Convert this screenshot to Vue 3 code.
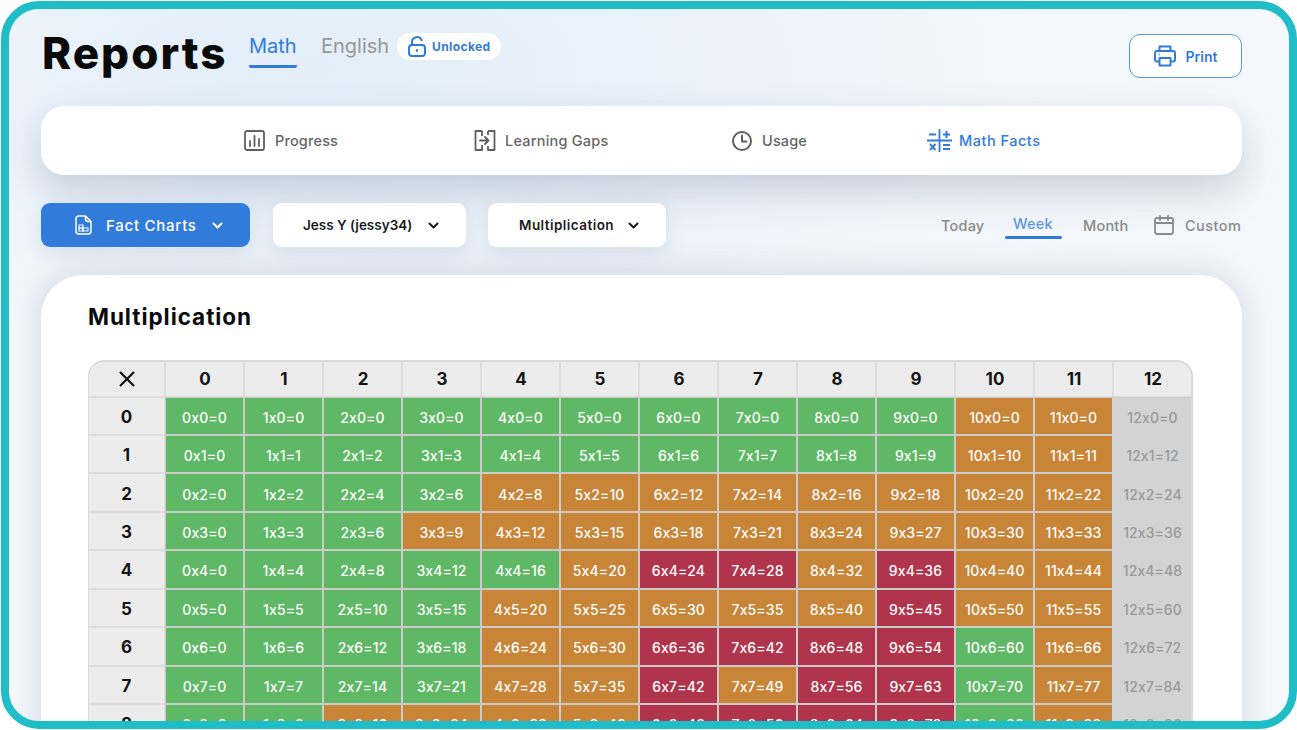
<script setup>
const rowColors = [
  'ggggggggggoox',
  'ggggggggggoox',
  'ggggoooooooox',
  'gggooooooooox',
  'gggggorrorоox',
  'ggggooooorоox',
  'ggggoorrrrgox',
  'ggggoororrgox',
  'ggoooorrrrgox',
]
const cols = Array.from({ length: 13 }, (_, i) => i)
const toneAt = (colors, c) => (colors[c] === 'g' || colors[c] === 'r' || colors[c] === 'x' ? colors[c] : 'o')
const rows = rowColors.map((colors, r) => ({
  r,
  cells: cols.map((c) => ({ c, label: `${c}x${r}=${c * r}`, tone: toneAt(colors, c) })),
}))
</script>

<template>
  <div class="frame">
    <header class="top">
      <h1 class="title">Reports</h1>
      <div class="tab active">Math</div>
      <div class="tab muted">English</div>
      <div class="pill">
        <svg width="20" height="21" viewBox="0 0 20 21" fill="none" stroke="#317bdb" stroke-width="2" stroke-linecap="round">
          <rect x="2" y="9" width="16" height="11" rx="3" />
          <path d="M5 9V6a5 5 0 0 1 9.6-1.800" />
          <path d="M10 14v1" stroke-width="2" />
        </svg>
        <span>Unlocked</span>
      </div>
      <button class="print">
        <svg width="22" height="22" viewBox="0 0 22 22" fill="none" stroke="#317bdb" stroke-width="2" stroke-linejoin="round">
          <path d="M5.500 6V1.500h11V6" />
          <path d="M5.500 16.500H3a2 2 0 0 1-2-2V8a2 2 0 0 1 2-2h16a2 2 0 0 1 2 2v6.500a2 2 0 0 1-2 2h-2.500" />
          <rect x="5.500" y="13" width="11" height="7.500" />
          <path d="M4.500 9.500h1" />
        </svg>
        <span>Print</span>
      </button>
    </header>

    <nav class="nav">
      <div class="nav-item">
        <svg width="21" height="21" viewBox="0 0 21 21" fill="none" stroke="#5f5f5f" stroke-width="1.800" stroke-linecap="round">
          <rect x="1" y="1" width="19" height="19" rx="2" />
          <path d="M6 11v5M10.500 6v10M15 9v7" />
        </svg>
        <span>Progress</span>
      </div>
      <div class="nav-item">
        <svg width="22" height="21" viewBox="0 0 22 21" fill="none" stroke="#5f5f5f" stroke-width="1.800" stroke-linejoin="round">
          <path d="M8 1H1.500v19H8v-5M8 6V1" />
          <path d="M14 1h6.500v19H14v-4M14 5V1" />
          <path d="M6 10.500h8.500M11 7l3.500 3.500L11 14" stroke-linecap="round" />
        </svg>
        <span>Learning Gaps</span>
      </div>
      <div class="nav-item">
        <svg width="20" height="20" viewBox="0 0 20 20" fill="none" stroke="#5f5f5f" stroke-width="2" stroke-linecap="round" stroke-linejoin="round">
          <circle cx="10" cy="10" r="9" />
          <path d="M10 4.500V10.500H14.500" />
        </svg>
        <span>Usage</span>
      </div>
      <div class="nav-item blue">
        <svg width="25" height="25" viewBox="0 0 25 25" fill="none" stroke="#317bdb" stroke-width="2">
          <path d="M12.500 1v23M0 12.500h25" stroke-width="1.800" />
          <path d="M2 6.500h7M16 6.500h7M19.500 3v7" />
          <path d="M3 16l5.500 6M8.500 16L3 22" />
          <path d="M16 17h7M16 21h7" />
        </svg>
        <span>Math Facts</span>
      </div>
    </nav>

    <section class="filters">
      <button class="select primary">
        <svg width="17" height="20" viewBox="0 0 17 20" fill="none" stroke="#fff" stroke-width="1.500" stroke-linejoin="round">
          <path d="M3.500 1h7L16 6.500V16a3 3 0 0 1-3 3H4a3 3 0 0 1-3-3V3.500A2.500 2.500 0 0 1 3.500 1z" />
          <path d="M10.500 1v3a2.500 2.500 0 0 0 2.500 2.500h3" />
          <rect x="4" y="10" width="4" height="3" stroke-width="1.200" />
          <rect x="4" y="13" width="4" height="3" stroke-width="1.200" />
          <rect x="8" y="13" width="5" height="3" stroke-width="1.200" />
        </svg>
        <span class="select-label light">Fact Charts</span>
        <svg class="chev" width="11" height="7" viewBox="0 0 11 7" fill="none" stroke="#fff" stroke-width="2" stroke-linecap="round" stroke-linejoin="round"><path d="M1.500 1.500l4 4 4-4" /></svg>
      </button>
      <button class="select student">
        <span class="select-label">Jess Y (jessy34)</span>
        <svg class="chev" width="11" height="7" viewBox="0 0 11 7" fill="none" stroke="#1a1a1a" stroke-width="2" stroke-linecap="round" stroke-linejoin="round"><path d="M1.500 1.500l4 4 4-4" /></svg>
      </button>
      <button class="select op">
        <span class="select-label wide">Multiplication</span>
        <svg class="chev" width="11" height="7" viewBox="0 0 11 7" fill="none" stroke="#1a1a1a" stroke-width="2" stroke-linecap="round" stroke-linejoin="round"><path d="M1.500 1.500l4 4 4-4" /></svg>
      </button>
      <div class="range">
        <span class="r-today">Today</span>
        <span class="r-week">Week</span>
        <span class="r-month">Month</span>
        <svg class="r-cal" width="20" height="20" viewBox="0 0 20 20" fill="none" stroke="#8a8a8a" stroke-width="1.800" stroke-linecap="round">
          <rect x="1" y="3" width="18" height="16" rx="2" />
          <path d="M1 8h18M6 1v4M14 1v4" />
        </svg>
        <span class="r-custom">Custom</span>
      </div>
    </section>

    <main class="card">
      <h2 class="card-title">Multiplication</h2>
      <div class="grid">
        <div class="head corner">
          <svg width="18" height="18" viewBox="0 0 18 18" fill="none" stroke="#141414" stroke-width="2.200"><path d="M2 2l14 14M16 2L2 16" /></svg>
        </div>
        <div v-for="c in cols" :key="'h' + c" class="head num">{{ c }}</div>
        <template v-for="row in rows" :key="row.r">
          <div class="head side">{{ row.r }}</div>
          <div v-for="cell in row.cells" :key="cell.c" class="cell" :class="'t-' + cell.tone">{{ cell.label }}</div>
        </template>
      </div>
    </main>
  </div>
</template>

<style>
html, body { margin: 0; background: #fff; }
</style>

<style scoped>
.frame {
  box-sizing: border-box;
  width: 1296px;
  height: 728px;
  margin: 1px 0 0 1px;
  border: 8px solid #1fbdc7;
  border-radius: 38px;
  overflow: hidden;
  padding: 25px 47px 0 32px;
  background:
    radial-gradient(700px 300px at 300px 60px, #e3eef9 0%, rgba(227, 238, 249, 0) 100%),
    linear-gradient(90deg, #f5f8fc 0%, #f0f5fb 50%, #f4f8fc 100%);
  font-family: Inter, "Noto Sans", "Liberation Sans", sans-serif;
  font-feature-settings: "calt" 0;
}
.top {
  display: flex;
  align-items: flex-start;
  height: 72px;
}
.title {
  margin: -3px 0 0 1px;
  font-size: 44px;
  line-height: 44px;
  font-weight: 800;
  color: #0a0a0a;
  width: 207px;
  letter-spacing: 2px;
}
.tab {
  font-size: 20px;
  line-height: 24px;
  padding-bottom: 7px;
}
.tab.active {
  color: #317bdb;
  width: 48px;
  border-bottom: 3px solid #317bdb;
  border-radius: 0 0 2px 2px;
  white-space: nowrap;
}
.tab.muted {
  color: #989898;
  margin-left: 24px;
  width: 76px;
  white-space: nowrap;
}
.pill {
  display: flex;
  align-items: center;
  gap: 5px;
  box-sizing: border-box;
  width: 104px;
  height: 27px;
  margin-top: -1px;
  padding-left: 10px;
  border-radius: 14px;
  background: #fff;
  color: #317bdb;
  font-size: 12px;
  font-weight: 700;
  letter-spacing: 0.400px;
}
.print {
  display: flex;
  align-items: center;
  justify-content: center;
  gap: 10px;
  margin-left: auto;
  box-sizing: border-box;
  width: 113px;
  height: 44px;
  padding: 0;
  background: #fff;
  border: 1.500px solid #5b96e0;
  border-radius: 11px;
  color: #317bdb;
  font: 600 14px Inter, sans-serif;
}
.nav {
  display: grid;
  grid-template-columns: 230px 258px 195px auto;
  align-items: center;
  height: 69px;
  padding-left: 203px;
  background: #fff;
  border-radius: 23px;
  box-shadow: 0 16px 38px rgba(80, 100, 125, 0.26);
}
.nav-item {
  display: flex;
  align-items: center;
  gap: 10px;
  color: #666;
  font-size: 14.500px;
  font-weight: 500;
  letter-spacing: 0.150px;
}
.nav-item:nth-child(2) { gap: 9px; letter-spacing: 0.220px; }
.nav-item.blue {
  color: #317bdb;
  gap: 7px;
  letter-spacing: 0.500px;
}
.filters {
  display: flex;
  align-items: center;
  height: 44px;
  margin-top: 28px;
}
.select {
  display: flex;
  align-items: center;
  box-sizing: border-box;
  height: 44px;
  padding: 0;
  border: 0;
  border-radius: 9px;
  background: #fff;
  box-shadow: 0 6px 20px rgba(80, 100, 125, 0.14);
  font-family: inherit;
  font-feature-settings: inherit;
  color: #1a1a1a;
}
.select.primary {
  width: 209px;
  padding-left: 34px;
  background: #317bdb;
}
.select.student {
  width: 193px;
  margin-left: 23px;
  padding-left: 30px;
}
.select.op {
  width: 178px;
  margin-left: 22px;
  padding-left: 31px;
}
.select-label {
  font-size: 13.500px;
  font-weight: 600;
  white-space: nowrap;
}
.select-label.wide { letter-spacing: 0.450px; }
.select-label.light {
  margin-left: 14px;
  font-size: 15px;
  font-weight: 500;
  letter-spacing: 0.750px;
  color: #fff;
}
.chev { margin-left: auto; margin-right: 27px; }
.range {
  display: flex;
  align-items: center;
  margin-left: auto;
  color: #8a8a8a;
  font-size: 14.500px;
  font-weight: 500;
  letter-spacing: 0.200px;
  position: relative;
  height: 44px;
}
.r-today { width: 64px; }
.r-week {
  width: 78px;
  margin-top: -4px;
  color: #5b96e0;
  padding-left: 8px;
  box-sizing: border-box;
}
.r-week::after {
  content: "";
  position: absolute;
  left: 64px;
  bottom: 8px;
  width: 57px;
  height: 3px;
  border-radius: 2px;
  background: #317bdb;
}
.r-month { width: 71px; }
.r-cal { margin-right: 11px; }
.r-custom { width: 57px; white-space: nowrap; letter-spacing: 0.450px; }
.card {
  margin-top: 28px;
  height: 600px;
  box-sizing: border-box;
  padding: 28px 0 0 47px;
  background: #fff;
  border-radius: 42px;
  box-shadow: 0 0 34px rgba(80, 100, 125, 0.22);
}
.card-title {
  margin: 0;
  font-size: 22.500px;
  line-height: 28px;
  font-weight: 700;
  letter-spacing: 0.950px;
  color: #0a0a0a;
}
.grid {
  display: grid;
  grid-template-columns: 75px repeat(13, 77px);
  grid-auto-rows: 36.450px;
  grid-template-rows: 33.500px;
  gap: 2px;
  width: 1105px;
  box-sizing: border-box;
  margin-top: 29px;
  border-style: solid;
  border-color: #dadada;
  border-width: 2px 2px 0 1px;
  border-radius: 16px 16px 0 0;
  overflow: hidden;
  background: #cdcaca;
}
.head {
  display: flex;
  align-items: center;
  justify-content: center;
  background: #ececec;
  color: #141414;
  font-size: 17px;
  font-weight: 700;
  box-shadow: 0 0 0 1px #dcdcdc;
}
.head.num { padding-left: 1px; }
.head.side { padding-top: 2px; box-sizing: border-box; }
.cell {
  display: flex;
  align-items: center;
  justify-content: center;
  padding-top: 3px;
  box-sizing: border-box;
  font-size: 14px;
  font-weight: 500;
  letter-spacing: 0.100px;
  color: #fff;
  white-space: nowrap;
}
.t-g { background: #5fb865; }
.t-o { background: #c98537; }
.t-r { background: #b1344d; }
.t-x {
  background: #d3d3d3;
  color: #999;
  box-shadow: -2px 0 0 #d3d3d3, 0 2px 0 #d3d3d3, -2px 2px 0 #d3d3d3;
}
</style>
